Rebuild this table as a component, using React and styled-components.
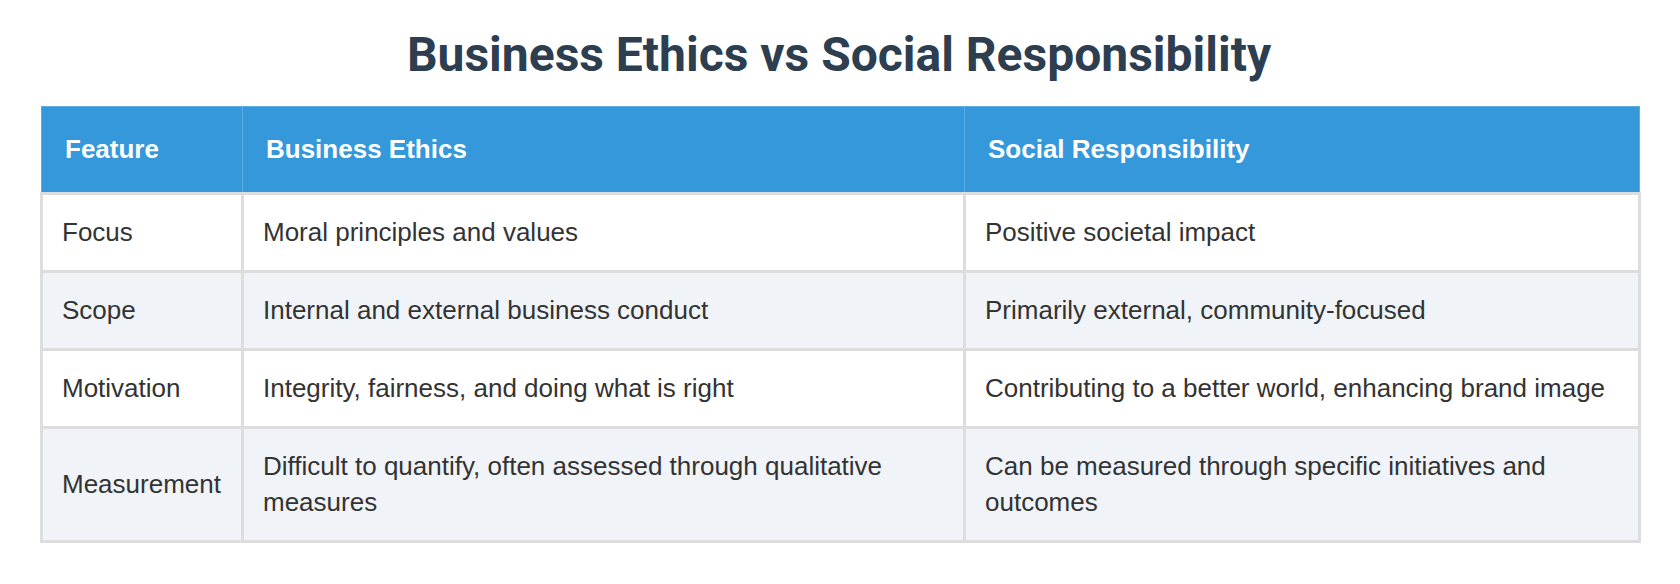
import React from 'react'
import styled, { createGlobalStyle } from 'styled-components'

const GlobalStyle = createGlobalStyle`
    body {
        margin: 0;
        background: #ffffff;
        font-family: "Liberation Sans", Arial, sans-serif;
        color: #333333;
    }
`;

const Page = styled.main`
    padding: 24px 42px 40px 40px;
`;

const Title = styled.h1`
    margin: 0 0 20px;
    font-family: Roboto, "Liberation Sans", sans-serif;
    font-size: 48px;
    font-weight: 700;
    line-height: 62px;
    text-align: center;
    color: #2c3e50;
`;

const Table = styled.table`
    width: 100%;
    table-layout: fixed;
    border-collapse: collapse;
    font-size: 26px;
    line-height: 36px;
`;

const HeadCell = styled.th`
    padding: 24px 23px 25px;
    background: #3498db;
    color: #ffffff;
    font-weight: 700;
    text-align: left;
    border: 1px solid #5dade2;
    border-bottom: 3px solid #dddddd;
`;

const Row = styled.tr`
    background: ${props => props.striped ? '#f0f4f8' : '#ffffff'};
`;

const Cell = styled.td`
    padding: 19px 19px 20px;
    border: 3px solid #dddddd;
    vertical-align: middle;
`;

const columns = [
    { label: 'Feature', width: 201 },
    { label: 'Business Ethics', width: 722 },
    { label: 'Social Responsibility', width: 675 },
];

const rows = [
    ['Focus', 'Moral principles and values', 'Positive societal impact'],
    ['Scope', 'Internal and external business conduct', 'Primarily external, community-focused'],
    ['Motivation', 'Integrity, fairness, and doing what is right', 'Contributing to a better world, enhancing brand image'],
    ['Measurement', 'Difficult to quantify, often assessed through qualitative measures', 'Can be measured through specific initiatives and outcomes'],
];

export default function App() {
    return (
        <Page>
            <GlobalStyle />
            <Title>Business Ethics vs Social Responsibility</Title>
            <Table>
                <colgroup>
                    {columns.map(col => <col key={col.label} style={{ width: col.width }} />)}
                </colgroup>
                <thead>
                    <tr>
                        {columns.map(col => <HeadCell key={col.label}>{col.label}</HeadCell>)}
                    </tr>
                </thead>
                <tbody>
                    {rows.map((row, i) => (
                        <Row key={row[0]} striped={i % 2 === 1}>
                            {row.map((text, j) => <Cell key={j}>{text}</Cell>)}
                        </Row>
                    ))}
                </tbody>
            </Table>
        </Page>
    )
}
